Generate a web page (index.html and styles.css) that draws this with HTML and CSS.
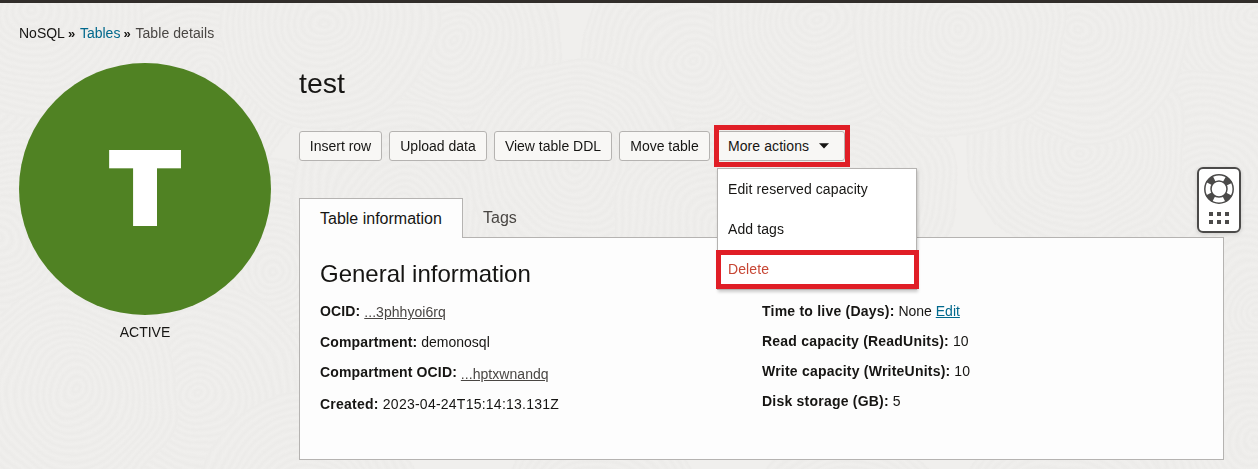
FILE: index.html
```html
<!DOCTYPE html>
<html lang="en">
<head>
<meta charset="utf-8">
<title>Table details</title>
<link rel="stylesheet" href="styles.css">
</head>
<body>
<svg class="texture" viewBox="0 0 1258 469" aria-hidden="true">
  <defs>
    <radialGradient id="ripple" gradientUnits="userSpaceOnUse" cx="0" cy="0" r="7" spreadMethod="repeat">
      <stop offset="0" stop-color="#f0efed"/><stop offset=".5" stop-color="#ecebe9"/><stop offset="1" stop-color="#f0efed"/>
    </radialGradient>
    <filter id="wobble" x="0" y="0" width="100%" height="100%">
      <feTurbulence type="fractalNoise" baseFrequency=".012" numOctaves="2" seed="4"/>
      <feDisplacementMap in="SourceGraphic" scale="24" xChannelSelector="R" yChannelSelector="G"/>
      <feGaussianBlur stdDeviation=".5"/>
    </filter>
    <circle id="disc" r="110" fill="url(#ripple)"/>
  </defs>
  <g filter="url(#wobble)">
  <use href="#disc" x="-20" y="90"/><use href="#disc" x="200" y="80"/><use href="#disc" x="450" y="40"/>
  <use href="#disc" x="690" y="60"/><use href="#disc" x="850" y="190"/><use href="#disc" x="1258" y="20"/>
  <use href="#disc" x="1210" y="180"/><use href="#disc" x="1258" y="310"/><use href="#disc" x="0" y="240"/>
  <use href="#disc" x="270" y="270"/><use href="#disc" x="400" y="210"/><use href="#disc" x="130" y="490"/>
  <use href="#disc" x="325" y="20"/><use href="#disc" x="35" y="10"/><use href="#disc" x="575" y="165"/>
  <use href="#disc" x="720" y="230"/><use href="#disc" x="820" y="20"/><use href="#disc" x="1078" y="150"/>
  <use href="#disc" x="1080" y="30"/><use href="#disc" x="958" y="32"/><use href="#disc" x="202" y="395"/>
  <use href="#disc" x="72" y="392"/><use href="#disc" x="310" y="500"/><use href="#disc" x="1250" y="440"/>
  <use href="#disc" x="600" y="530"/><use href="#disc" x="850" y="540"/><use href="#disc" x="1060" y="530"/>
  </g>
</svg>
<div class="topbar"></div>
<nav class="crumbs">
  <span>NoSQL</span><span class="sep">»</span><a class="crumb-link" href="#">Tables</a><span class="sep">»</span><span class="current">Table details</span>
</nav>
<div class="layout">
  <aside class="status">
    <div class="badge"><span class="letter">T</span></div>
    <div class="state">ACTIVE</div>
  </aside>
  <main class="content">
    <h1 class="title">test</h1>
    <div class="actions">
      <button class="btn insert">Insert row</button>
      <button class="btn upload">Upload data</button>
      <button class="btn ddl">View table DDL</button>
      <button class="btn move">Move table</button>
      <div class="more">
        <button class="btn more-btn">More actions<svg class="caret" viewBox="0 0 10 6"><path d="M0 0.3H10L5 5.6Z"/></svg></button>
        <div class="menu">
          <div class="item">Edit reserved capacity</div>
          <div class="item">Add tags</div>
          <div class="item danger">Delete</div>
          <div class="mark mark-delete"></div>
        </div>
        <div class="mark mark-more"></div>
      </div>
    </div>
    <div class="tabs">
      <div class="tab active">Table information</div>
      <div class="tab tags">Tags</div>
    </div>
    <section class="panel">
      <h2 class="heading">General information</h2>
      <div class="columns">
        <div class="col left">
          <div class="row"><b>OCID:</b> <a class="ocid" href="#">...3phhyoi6rq</a></div>
          <div class="row"><b>Compartment:</b> demonosql</div>
          <div class="row"><b>Compartment OCID:</b> <a class="ocid low" href="#">...hptxwnandq</a></div>
          <div class="row created"><b>Created:</b> 2023-04-24T15:14:13.131Z</div>
        </div>
        <div class="col right">
          <div class="row"><b>Time to live (Days):</b> None <a class="edit" href="#">Edit</a></div>
          <div class="row"><b>Read capacity (ReadUnits):</b> 10</div>
          <div class="row"><b>Write capacity (WriteUnits):</b> 10</div>
          <div class="row"><b>Disk storage (GB):</b> 5</div>
        </div>
      </div>
    </section>
  </main>
</div>
<div class="help">
  <svg viewBox="0 0 44 66" width="44" height="66">
    <rect x="1" y="1" width="42" height="64" rx="5" fill="#fff" stroke="#4b4a49" stroke-width="2"/>
    <g fill="none" stroke="#4b4a49">
      <circle cx="22" cy="22" r="11.2" stroke-width="7" stroke-dasharray="7 10.593" stroke-dashoffset="-5.3"/>
      <circle cx="22" cy="22" r="14.2" stroke-width="1.5"/>
      <circle cx="22" cy="22" r="8" stroke-width="1.5"/>
    </g>
    <path fill="#4b4a49" d="M12 45h4v4h-4zM20 45h4v4h-4zM28 45h4v4h-4zM12 53h4v4h-4zM20 53h4v4h-4zM28 53h4v4h-4z"/>
  </svg>
</div>
</body>
</html>
```

FILE: styles.css
```css
* { box-sizing: border-box; }
body {
  margin: 0;
  height: 469px;
  overflow: hidden;
  position: relative;
  background: #f0efed;
  color: #161513;
  font: 14px/20px "Liberation Sans", Arial, sans-serif;
}
.texture { position: absolute; inset: 0; width: 1258px; height: 469px; z-index: -1; }
.topbar { height: 3px; background: #312d2a; }
.crumbs { height: 60px; padding: 20px 19px 0; white-space: nowrap; }
.sep { display: inline-block; width: 15px; padding-left: 3px; font-weight: bold; font-size: 13px; line-height: 16px; }
.crumb-link { color: #00688c; text-decoration: none; }
.current { color: #494643; letter-spacing: .08px; }
.layout { display: flex; padding-left: 19px; gap: 28px; }
.status { width: 252px; text-align: center; }
.badge {
  width: 252px;
  height: 252px;
  border-radius: 50%;
  background: #508223;
  display: flex;
  align-items: center;
  justify-content: center;
}
.letter {
  color: #fff;
  font: 900 102px/102px Inter, sans-serif;
  -webkit-text-stroke: 2px #fff;
  transform: translateY(-1px) scaleX(1.08);
}
.state { margin-top: 7px; }
.content { width: 925px; }
.title { margin: 0; height: 68px; font-size: 28.5px; line-height: 40px; font-weight: normal; }
.actions { display: flex; gap: 7px; height: 67px; }
.btn {
  height: 30px;
  padding: 0;
  border: 1px solid #b5b3b1;
  border-radius: 3px;
  background: #f8f7f5;
  color: #161513;
  font: 14px/20px "Liberation Sans", Arial, sans-serif;
  white-space: nowrap;
}
.insert { width: 83px; }
.upload { width: 98px; }
.ddl { width: 118px; }
.move { width: 91px; }
.more { position: relative; }
.more-btn { width: 128px; padding-left: 10px; display: flex; align-items: center; gap: 10px; letter-spacing: .08px; }
.caret { width: 10px; height: 6px; fill: #161513; }
.menu {
  position: absolute;
  top: 37px;
  left: 0;
  width: 200px;
  height: 122px;
  border: 1px solid #b5b3b1;
  background: #fff;
  box-shadow: 1px 2px 3px rgba(0, 0, 0, .2);
  z-index: 2;
}
.item { height: 40px; padding: 10px; letter-spacing: .1px; }
.danger { color: #c74634; }
.mark { position: absolute; border: 5px solid #e01e26; z-index: 3; }
.mark-delete { left: -2px; top: 81px; width: 203px; height: 39px; }
.mark-more { left: -3px; top: -6px; width: 136px; height: 42px; }
.tabs { display: flex; height: 39px; }
.tab { padding: 9px 20px; font-size: 16px; color: #494643; }
.tags { padding-top: 10px; }
.active {
  height: 40px;
  width: 164px;
  padding-top: 10px;
  border: 1px solid #b5b3b1;
  border-bottom: 0;
  background: #fdfdfd;
  color: #161513;
  position: relative;
  z-index: 1;
}
.panel { height: 223px; padding: 20px; border: 1px solid #b5b3b1; background: #fdfdfd; }
.heading { margin: 0; font-size: 24px; line-height: 32px; font-weight: normal; }
.columns { display: grid; grid-template-columns: 442px 1fr; padding-top: 11px; }
.col { display: grid; align-content: start; grid-auto-rows: 30px; }
.left { grid-template-rows: 31px 30px 32px 30px; }
.row { white-space: nowrap; }
.left b { letter-spacing: .14px; }
.right b { letter-spacing: .22px; }
.created, .created b { letter-spacing: .24px; }
.ocid { color: #494643; display: inline-block; position: relative; top: 1px; letter-spacing: .05px; }
.low { top: 2px; }
.edit { color: #00688c; }
.help { position: absolute; left: 1197px; top: 167px; width: 44px; height: 66px; border-radius: 6px; box-shadow: 0 1px 4px rgba(0, 0, 0, .15); }
```
